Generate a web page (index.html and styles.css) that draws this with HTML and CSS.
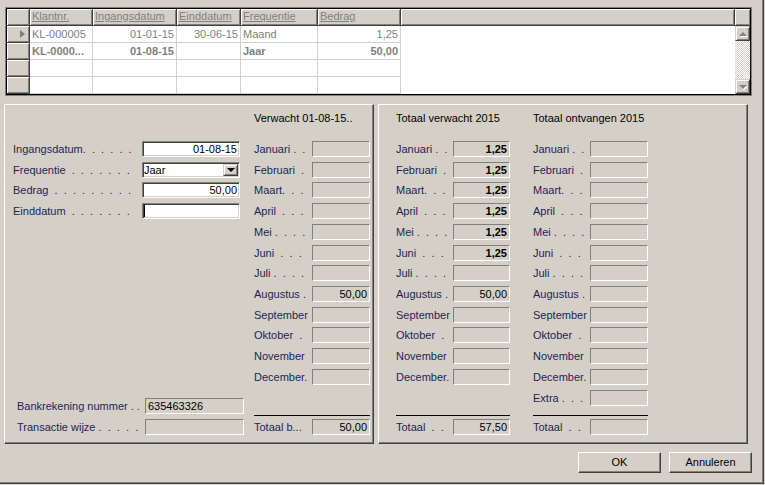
FILE: index.html
```html
<!DOCTYPE html>
<html>
<head>
<meta charset="utf-8">
<link rel="stylesheet" href="styles.css">
</head>
<body>
<div class="win">
  <div class="grid">
    <div class="gmain">
      <div class="grow">
        <div class="ind"></div>
        <div class="hc w1">Klantnr.</div>
        <div class="hc w2">Ingangsdatum</div>
        <div class="hc w3">Einddatum</div>
        <div class="hc w4">Frequentie</div>
        <div class="hc w5">Bedrag</div>
        <div class="hc wf nu"></div>
      </div>
      <div class="grow">
        <div class="ind"><span class="tri"></span></div>
        <div class="dc w1">KL-000005</div>
        <div class="dc w2 r">01-01-15</div>
        <div class="dc w3 r">30-06-15</div>
        <div class="dc w4">Maand</div>
        <div class="dc w5 r">1,25</div>
      </div>
      <div class="grow">
        <div class="ind"></div>
        <div class="dc w1 b">KL-0000...</div>
        <div class="dc w2 r b">01-08-15</div>
        <div class="dc w3 r"></div>
        <div class="dc w4 b">Jaar</div>
        <div class="dc w5 r b">50,00</div>
      </div>
      <div class="grow">
        <div class="ind"></div>
        <div class="dc w1"></div>
        <div class="dc w2"></div>
        <div class="dc w3"></div>
        <div class="dc w4"></div>
        <div class="dc w5"></div>
      </div>
      <div class="grow">
        <div class="ind"></div>
        <div class="dc w1"></div>
        <div class="dc w2"></div>
        <div class="dc w3"></div>
        <div class="dc w4"></div>
        <div class="dc w5"></div>
      </div>
    </div>
    <div class="vs">
      <div class="corner"></div>
      <div class="sbtn"><span class="aup"></span></div>
      <div class="track"></div>
      <div class="sbtn"><span class="adn"></span></div>
    </div>
  </div>

  <div class="panels">
    <div class="panel p1">
      <div class="col lcol">
        <div class="row"><div class="lab ll">Ingangsdatum.  .  .  .  .  .</div><div class="fld in lf r">01-08-15</div></div>
        <div class="row"><div class="lab ll">Frequentie  .  .  .  .  .  .  .</div><div class="fld in lf combo"><span>Jaar</span><span class="ddb"><span class="adark"></span></span></div></div>
        <div class="row"><div class="lab ll">Bedrag  .  .  .  .  .  .  .  .  .</div><div class="fld in lf r">50,00</div></div>
        <div class="row"><div class="lab ll">Einddatum  .  .  .  .  .  .  .</div><div class="fld in lf cur"><span class="caret"></span></div></div>
        <div class="bot lbot">
          <div class="row last"><div class="lab lb">Bankrekening nummer . .</div><div class="fld ro bf">635463326</div></div>
          <div class="row last"><div class="lab lb">Transactie wijze .  .  .  .  .</div><div class="fld ro bf"></div></div>
        </div>
      </div>
      <div class="col mcol c116">
        <div class="hd">Verwacht 01-08-15..</div>
        <div class="row"><div class="lab m58">Januari .  .</div><div class="fld ro f58"></div></div>
        <div class="row"><div class="lab m58">Februari  .</div><div class="fld ro f58"></div></div>
        <div class="row"><div class="lab m58">Maart.  .  .</div><div class="fld ro f58"></div></div>
        <div class="row"><div class="lab m58">April  .  .  .</div><div class="fld ro f58"></div></div>
        <div class="row"><div class="lab m58">Mei .  .  .  .</div><div class="fld ro f58"></div></div>
        <div class="row"><div class="lab m58">Juni  .  .  .</div><div class="fld ro f58"></div></div>
        <div class="row"><div class="lab m58">Juli .  .  .  .</div><div class="fld ro f58"></div></div>
        <div class="row"><div class="lab m58">Augustus .</div><div class="fld ro f58">50,00</div></div>
        <div class="row"><div class="lab m58">September</div><div class="fld ro f58"></div></div>
        <div class="row"><div class="lab m58">Oktober  .</div><div class="fld ro f58"></div></div>
        <div class="row"><div class="lab m58">November</div><div class="fld ro f58"></div></div>
        <div class="row"><div class="lab m58">December.</div><div class="fld ro f58"></div></div>
        <div class="bot">
          <div class="sep"></div>
          <div class="row last"><div class="lab m58">Totaal b...</div><div class="fld ro f58">50,00</div></div>
        </div>
      </div>
    </div>

    <div class="panel p2">
      <div class="col mcol c114">
        <div class="hd">Totaal verwacht 2015</div>
        <div class="row"><div class="lab m57">Januari .  .</div><div class="fld ro f57 b">1,25</div></div>
        <div class="row"><div class="lab m57">Februari  .</div><div class="fld ro f57 b">1,25</div></div>
        <div class="row"><div class="lab m57">Maart.  .  .</div><div class="fld ro f57 b">1,25</div></div>
        <div class="row"><div class="lab m57">April  .  .  .</div><div class="fld ro f57 b">1,25</div></div>
        <div class="row"><div class="lab m57">Mei .  .  .  .</div><div class="fld ro f57 b">1,25</div></div>
        <div class="row"><div class="lab m57">Juni  .  .  .</div><div class="fld ro f57 b">1,25</div></div>
        <div class="row"><div class="lab m57">Juli .  .  .  .</div><div class="fld ro f57"></div></div>
        <div class="row"><div class="lab m57">Augustus .</div><div class="fld ro f57">50,00</div></div>
        <div class="row"><div class="lab m57">September</div><div class="fld ro f57"></div></div>
        <div class="row"><div class="lab m57">Oktober  .</div><div class="fld ro f57"></div></div>
        <div class="row"><div class="lab m57">November</div><div class="fld ro f57"></div></div>
        <div class="row"><div class="lab m57">December.</div><div class="fld ro f57"></div></div>
        <div class="bot">
          <div class="sep"></div>
          <div class="row last"><div class="lab m57">Totaal  .  .</div><div class="fld ro f57">57,50</div></div>
        </div>
      </div>
      <div class="col mcol c115">
        <div class="hd">Totaal ontvangen 2015</div>
        <div class="row"><div class="lab m57">Januari .  .</div><div class="fld ro f58"></div></div>
        <div class="row"><div class="lab m57">Februari  .</div><div class="fld ro f58"></div></div>
        <div class="row"><div class="lab m57">Maart.  .  .</div><div class="fld ro f58"></div></div>
        <div class="row"><div class="lab m57">April  .  .  .</div><div class="fld ro f58"></div></div>
        <div class="row"><div class="lab m57">Mei .  .  .  .</div><div class="fld ro f58"></div></div>
        <div class="row"><div class="lab m57">Juni  .  .  .</div><div class="fld ro f58"></div></div>
        <div class="row"><div class="lab m57">Juli .  .  .  .</div><div class="fld ro f58"></div></div>
        <div class="row"><div class="lab m57">Augustus .</div><div class="fld ro f58"></div></div>
        <div class="row"><div class="lab m57">September</div><div class="fld ro f58"></div></div>
        <div class="row"><div class="lab m57">Oktober  .</div><div class="fld ro f58"></div></div>
        <div class="row"><div class="lab m57">November</div><div class="fld ro f58"></div></div>
        <div class="row"><div class="lab m57">December.</div><div class="fld ro f58"></div></div>
        <div class="row"><div class="lab m57">Extra .  .  .</div><div class="fld ro f58"></div></div>
        <div class="bot">
          <div class="sep"></div>
          <div class="row last"><div class="lab m57">Totaal  .  .</div><div class="fld ro f58"></div></div>
        </div>
      </div>
    </div>
  </div>

  <div class="btns">
    <div class="btn">OK</div>
    <div class="btn">Annuleren</div>
  </div>
</div>
</body>
</html>
```

FILE: styles.css
```css
body {
  margin: 0;
  background: #d4d0c8;
  font: 11px "Liberation Sans", Arial, sans-serif;
  color: #000;
}

.win {
  width: 764px;
  height: 484px;
  box-sizing: border-box;
  border-right: 1px solid #404040;
  border-bottom: 1px solid #404040;
  box-shadow: inset -1px -1px #808080;
  display: flex;
  flex-direction: column;
}

/* ---------- grid ---------- */
.grid {
  margin: 8px 0 0 6px;
  width: 745px;
  height: 87px;
  box-sizing: border-box;
  border: 1px solid #000;
  outline: 1px solid #808080;
  display: flex;
  background: #fff;
}
.gmain { width: 728px; }
.grow { display: flex; height: 17px; }

.ind {
  width: 23px;
  height: 17px;
  flex: none;
  box-sizing: border-box;
  background: #d4d0c8;
  border-right: 1px solid #404040;
  border-bottom: 1px solid #404040;
  box-shadow: inset 1px 1px #fff, inset -1px -1px #808080;
  display: flex;
  align-items: center;
  padding-left: 13px;
}
.tri {
  width: 0;
  height: 0;
  border-left: 5px solid #808080;
  border-top: 4px solid transparent;
  border-bottom: 4px solid transparent;
}

.hc {
  height: 17px;
  flex: none;
  box-sizing: border-box;
  background: #d4d0c8;
  border-right: 1px solid #404040;
  border-bottom: 1px solid #404040;
  box-shadow: inset 1px 1px #fff, inset -1px -1px #808080;
  color: #808080;
  text-decoration: underline;
  padding-left: 2px;
  line-height: 15px;
  white-space: nowrap;
  overflow: hidden;
}
.dc {
  height: 17px;
  flex: none;
  box-sizing: border-box;
  border-right: 1px solid #d4d0c8;
  border-bottom: 1px solid #d4d0c8;
  color: #808080;
  padding: 1px 2px 0;
  line-height: 15px;
  white-space: nowrap;
  overflow: hidden;
}
.w1 { width: 63px; }
.w2 { width: 84px; }
.w3 { width: 64px; }
.w4 { width: 77px; }
.w5 { width: 83px; }
.wf { width: 334px; }
.r { text-align: right; }
.b { font-weight: bold; }

.vs {
  width: 15px;
  display: flex;
  flex-direction: column;
  background: #d4d0c8;
}
.corner {
  height: 17px;
  box-sizing: border-box;
  border-bottom: 1px solid #404040;
  box-shadow: inset 1px 1px #fff, inset -1px -1px #808080;
}
.sbtn {
  height: 15px;
  flex: none;
  box-sizing: border-box;
  border: 1px solid;
  border-color: #d4d0c8 #404040 #404040 #d4d0c8;
  box-shadow: inset 1px 1px #fff, inset -1px -1px #808080;
  display: flex;
  align-items: center;
  justify-content: center;
}
.track {
  flex: 1;
  background: repeating-conic-gradient(#d4d0c8 0 25%, #fff 0 50%) 0 0 / 2px 2px;
}
.aup {
  width: 0; height: 0;
  border-left: 4px solid transparent;
  border-right: 4px solid transparent;
  border-bottom: 4px solid #808080;
  filter: drop-shadow(1px 1px 0 #fff);
}
.adn {
  width: 0; height: 0;
  border-left: 4px solid transparent;
  border-right: 4px solid transparent;
  border-top: 4px solid #808080;
  filter: drop-shadow(1px 1px 0 #fff);
}

/* ---------- panels ---------- */
.panels {
  display: flex;
  gap: 4px;
  margin: 9px 0 0 4px;
  height: 340px;
}
.panel {
  width: 370px;
  height: 340px;
  box-sizing: border-box;
  border: 1px solid;
  border-color: #fff #404040 #404040 #fff;
  box-shadow: inset -1px -1px #808080;
  display: flex;
  padding-bottom: 8px;
}
.p1 { padding-left: 8px; }
.p2 { padding-left: 17px; gap: 23px; }

.col { display: flex; flex-direction: column; }
.lcol { width: 231px; padding-top: 36px; }
.mcol { padding-top: 6px; }
.p1 .mcol { margin-left: 10px; }
.c116 { width: 116px; }
.c114 { width: 114px; }
.c115 { width: 115px; }

.hd {
  height: 15px;
  line-height: 15px;
  margin-bottom: 15px;
  white-space: nowrap;
}

.row {
  display: flex;
  height: 20.73px;
  flex: none;
}
.row.last { height: 16px; }
.lab {
  height: 16px;
  line-height: 16px;
  white-space: pre;
  overflow: hidden;
  color: #1f1f55;
  flex: none;
}
.ll { width: 129px; }
.lb { width: 128px; }
.m58 { width: 58px; }
.m57 { width: 57px; }

.fld {
  height: 16px;
  box-sizing: border-box;
  line-height: 14px;
  white-space: nowrap;
  overflow: hidden;
  flex: none;
}
.ro {
  border: 1px solid;
  border-color: #808080 #fff #fff #808080;
  background: #d4d0c8;
  text-align: right;
  padding: 0 2px;
}
.in {
  background: #fff;
  border: 1px solid;
  border-color: #808080 #fff #fff #808080;
  box-shadow: inset 1px 1px #404040, inset -1px -1px #d4d0c8;
  padding: 0 2px;
}
.lf { width: 98px; }
.bf { width: 99px; text-align: left; padding-left: 2px; }
.f58 { width: 58px; }
.f57 { width: 57px; }

.combo {
  display: flex;
  justify-content: space-between;
  align-items: center;
  padding: 0 0 0 1px;
}
.ddb {
  width: 15px;
  height: 12px;
  margin-right: 1px;
  box-sizing: border-box;
  background: #d4d0c8;
  border: 1px solid;
  border-color: #d4d0c8 #404040 #404040 #d4d0c8;
  box-shadow: inset 1px 1px #fff, inset -1px -1px #808080;
  display: flex;
  align-items: center;
  justify-content: center;
}
.adark {
  width: 0; height: 0;
  border-left: 4px solid transparent;
  border-right: 4px solid transparent;
  border-top: 4px solid #000;
}
.cur { display: flex; align-items: center; padding-left: 1px; }
.caret { width: 1px; height: 12px; background: #000; }

.bot { margin-top: auto; display: flex; flex-direction: column; }
.lbot { padding-left: 4px; gap: 5px; }
.sep { height: 1px; background: #000; margin-bottom: 3px; }

/* ---------- buttons ---------- */
.btns {
  display: flex;
  justify-content: flex-end;
  gap: 8px;
  margin: 8px 11px 0 0;
}
.btn {
  width: 83px;
  height: 21px;
  box-sizing: border-box;
  border: 1px solid;
  border-color: #fff #404040 #404040 #fff;
  box-shadow: inset -1px -1px #808080;
  text-align: center;
  line-height: 19px;
}
```
